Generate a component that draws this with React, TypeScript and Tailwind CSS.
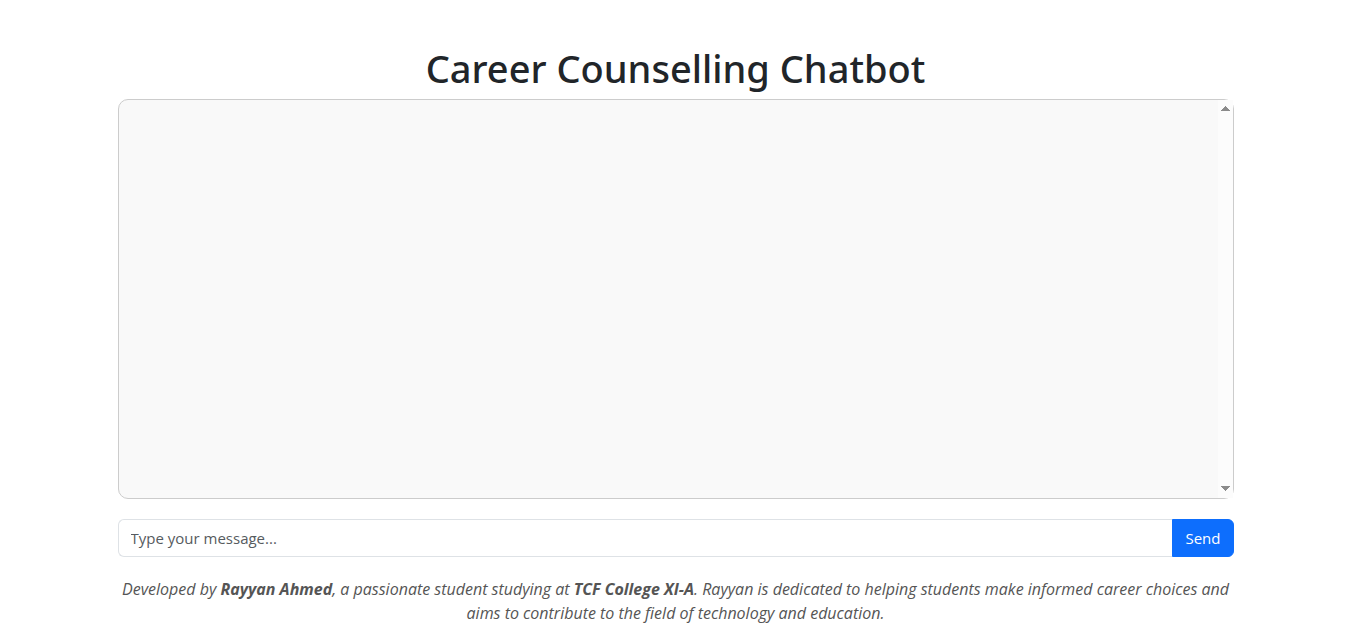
import React, { useRef, useState } from "react";

export default function App() {
  const [message, setMessage] = useState("");
  const log = useRef<HTMLDivElement>(null);
  const scroll = (distance: number) => log.current?.scrollBy({ top: distance });

  return (
    <main className="mx-auto max-w-[1140px] px-3 pt-11 font-['Noto_Sans',sans-serif] text-base leading-6 text-[#212529]">
      <h1 className="mb-[7px] text-center text-[38px] leading-12 font-medium">Career Counselling Chatbot</h1>
      <section aria-label="Conversation" className="flex h-[400px] rounded-[10px] border border-[#cccccc] bg-[#f9f9f9]">
        <div ref={log} className="min-w-0 flex-1 overflow-y-auto" />
        <div className="flex w-[15px] flex-col items-center justify-between bg-[#fcfcfc] pt-[6px] pb-[7px]">
          <button type="button" aria-label="Scroll up" onClick={() => scroll(-40)}>
            <svg className="block" width="9" height="5" viewBox="0 0 9 5" fill="#8b8b8b" aria-hidden="true">
              <path d="M4 0h1v1h1v1h1v1h1v1h1v1H0V4h1V3h1V2h1V1h1z" />
            </svg>
          </button>
          <button type="button" aria-label="Scroll down" onClick={() => scroll(40)}>
            <svg className="block" width="9" height="5" viewBox="0 0 9 5" fill="#8b8b8b" aria-hidden="true">
              <path d="M0 0h9v1H8v1H7v1H6v1H5v1H4V4H3V3H2V2H1V1H0z" />
            </svg>
          </button>
        </div>
      </section>
      <form className="mt-5 flex font-['Open_Sans',sans-serif]" onSubmit={(event) => event.preventDefault()}>
        <input
          type="text"
          aria-label="Message"
          placeholder="Type your message..."
          value={message}
          onChange={(event) => setMessage(event.target.value)}
          className="h-[38px] min-w-0 flex-1 rounded-l-md border border-r-0 border-[#dee2e6] px-3 text-[15px] placeholder:text-[#565b60]"
        />
        <button type="submit" className="h-[38px] rounded-r-md border border-[#0d6efd] bg-[#0d6efd] px-3 text-[15px] text-white">Send</button>
      </form>
      <p className="mt-5 text-center font-['Open_Sans',sans-serif] text-base text-[#555555] italic">
        Developed by <strong>Rayyan Ahmed</strong>, a passionate student studying at <strong>TCF College XI-A</strong>. Rayyan is dedicated to helping students make informed career choices and aims to contribute to the field of technology and education.
      </p>
    </main>
  );
}
